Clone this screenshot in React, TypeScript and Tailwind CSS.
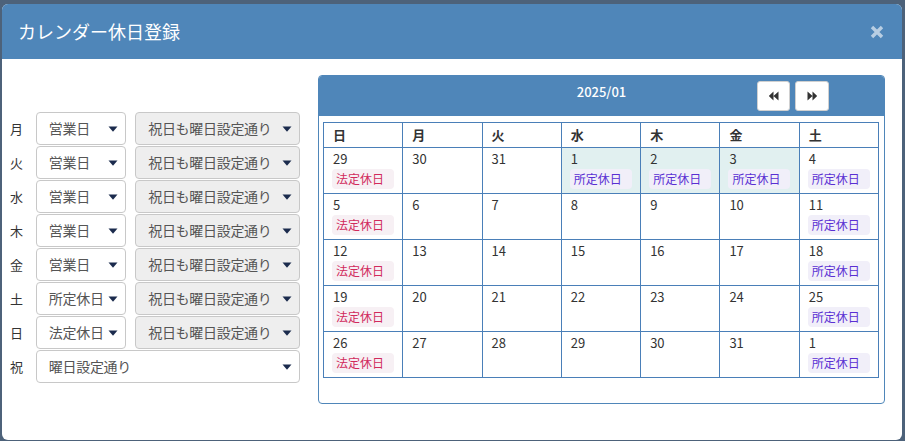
const weekRules = [
  { label: "月", value: "営業日" },
  { label: "火", value: "営業日" },
  { label: "水", value: "営業日" },
  { label: "木", value: "営業日" },
  { label: "金", value: "営業日" },
  { label: "土", value: "所定休日" },
  { label: "日", value: "法定休日" },
];

const dayNames = ["日", "月", "火", "水", "木", "金", "土"];

type Cell = { day: number; tag?: "legal" | "company"; highlight?: boolean };

const weeks: Cell[][] = [
  [
    { day: 29, tag: "legal" },
    { day: 30 },
    { day: 31 },
    { day: 1, tag: "company", highlight: true },
    { day: 2, tag: "company", highlight: true },
    { day: 3, tag: "company", highlight: true },
    { day: 4, tag: "company" },
  ],
  [
    { day: 5, tag: "legal" },
    { day: 6 },
    { day: 7 },
    { day: 8 },
    { day: 9 },
    { day: 10 },
    { day: 11, tag: "company" },
  ],
  [
    { day: 12, tag: "legal" },
    { day: 13 },
    { day: 14 },
    { day: 15 },
    { day: 16 },
    { day: 17 },
    { day: 18, tag: "company" },
  ],
  [
    { day: 19, tag: "legal" },
    { day: 20 },
    { day: 21 },
    { day: 22 },
    { day: 23 },
    { day: 24 },
    { day: 25, tag: "company" },
  ],
  [
    { day: 26, tag: "legal" },
    { day: 27 },
    { day: 28 },
    { day: 29 },
    { day: 30 },
    { day: 31 },
    { day: 1, tag: "company" },
  ],
];

function Caret() {
  return (
    <svg width="10" height="6" viewBox="0 0 10 6" className="ml-[3px] shrink-0">
      <path d="M0.5 0.5 L9.5 0.5 L5 5.8 Z" fill="#1b2b4d" />
    </svg>
  );
}

function SelectBox({
  value,
  className,
}: {
  value: string;
  className: string;
}) {
  return (
    <div
      className={`flex h-[33px] items-center justify-between rounded-[4px] border border-[#c8c8c8] pl-[12px] pr-[7px] text-[14px] text-[#555] ${className}`}
    >
      <span className="whitespace-nowrap tracking-[-0.3px]">{value}</span>
      <Caret />
    </div>
  );
}

function NavArrow({ dir }: { dir: "prev" | "next" }) {
  return (
    <svg width="11" height="10" viewBox="0 0 11 10">
      {dir === "prev" ? (
        <path d="M5.5 0.5 L5.5 9.5 L0.8 5 Z M10.5 0.5 L10.5 9.5 L5.5 5 Z" fill="#333" />
      ) : (
        <path d="M0.5 0.5 L0.5 9.5 L5.5 5 Z M5.5 0.5 L5.5 9.5 L10.2 5 Z" fill="#333" />
      )}
    </svg>
  );
}

function CloseIcon() {
  return (
    <svg width="14" height="14" viewBox="0 0 14 14">
      <path
        d="M2 2 L12 12 M12 2 L2 12"
        stroke="#ffffff"
        strokeOpacity="0.6"
        strokeWidth="3.4"
        strokeLinecap="butt"
      />
    </svg>
  );
}

export default function App() {
  return (
    <div
      className="h-[441px] w-[905px] overflow-hidden bg-[#4d627a] pt-[4px] pl-[2px]"
      style={{ fontFamily: '"Noto Sans CJK JP", "Noto Sans", sans-serif' }}
    >
      <div className="h-[436px] w-[900px] overflow-hidden rounded-[6px] bg-white">
        {/* Header */}
        <div className="flex h-[55px] items-center justify-between bg-[#4f86b9] pl-[16px] pr-[18px]">
          <h1 className="text-[18px] text-white">カレンダー休日登録</h1>
          <CloseIcon />
        </div>

        {/* Body */}
        <div className="flex pt-[16px] pl-[8px]">
          {/* Weekly rules */}
          <div className="mt-[37px] flex w-[290px] flex-col gap-[1px]">
            {weekRules.map((r) => (
              <div key={r.label} className="flex items-center">
                <span className="w-[26px] text-[13px] text-[#333]">{r.label}</span>
                <SelectBox value={r.value} className="w-[91px] bg-white" />
                <SelectBox
                  value="祝日も曜日設定通り"
                  className="ml-[9px] w-[166px] bg-[#eeeeee]"
                />
              </div>
            ))}
            <div className="flex items-center">
              <span className="w-[26px] text-[13px] text-[#333]">祝</span>
              <SelectBox value="曜日設定通り" className="w-[266px] bg-white" />
            </div>
          </div>

          {/* Calendar */}
          <div className="ml-[18px] w-[567px] overflow-hidden rounded-[4px] border border-[#4f86b9] pb-[25px]">
            <div className="relative h-[40px] bg-[#4f86b9]">
              <div className="pt-[6px] text-center text-[13px] font-medium text-white">
                2025/01
              </div>
              <div className="absolute right-[55px] top-[5px] flex gap-[5px]">
                <button className="flex h-[30px] w-[33px] items-center justify-center rounded-[3px] border border-[#d0d0d0] bg-white">
                  <NavArrow dir="prev" />
                </button>
                <button className="flex h-[30px] w-[34px] items-center justify-center rounded-[3px] border border-[#d0d0d0] bg-white">
                  <NavArrow dir="next" />
                </button>
              </div>
            </div>
            <div className="px-[4px] pt-[6px]">
              <table className="w-[556px] table-fixed border-collapse text-[13px] text-[#333]">
                <thead>
                  <tr>
                    {dayNames.map((d) => (
                      <th
                        key={d}
                        className="h-[25px] border border-[#4a7fb8] pl-[9px] text-left font-bold"
                      >
                        {d}
                      </th>
                    ))}
                  </tr>
                </thead>
                <tbody>
                  {weeks.map((w, i) => (
                    <tr key={i}>
                      {w.map((c, j) => (
                        <td
                          key={j}
                          className={`h-[46px] border border-[#4a7fb8] px-[8px] pt-[2px] align-top ${
                            c.highlight ? "bg-[#e1f0f0]" : ""
                          }`}
                        >
                          <div className="pl-[1px] leading-[18px]">{c.day}</div>
                          {c.tag === "legal" && (
                            <div className="mt-[1px] w-[62px] rounded-[4px] bg-[#f7f0f4] pl-[4px] text-[12px] leading-[20px] text-[#d12a5c]">
                              法定休日
                            </div>
                          )}
                          {c.tag === "company" && (
                            <div className="mt-[1px] w-[62px] rounded-[4px] bg-[#f1eff9] pl-[4px] text-[12px] leading-[20px] text-[#5a2fd3]">
                              所定休日
                            </div>
                          )}
                        </td>
                      ))}
                    </tr>
                  ))}
                </tbody>
              </table>
            </div>
          </div>
        </div>
      </div>
    </div>
  );
}
